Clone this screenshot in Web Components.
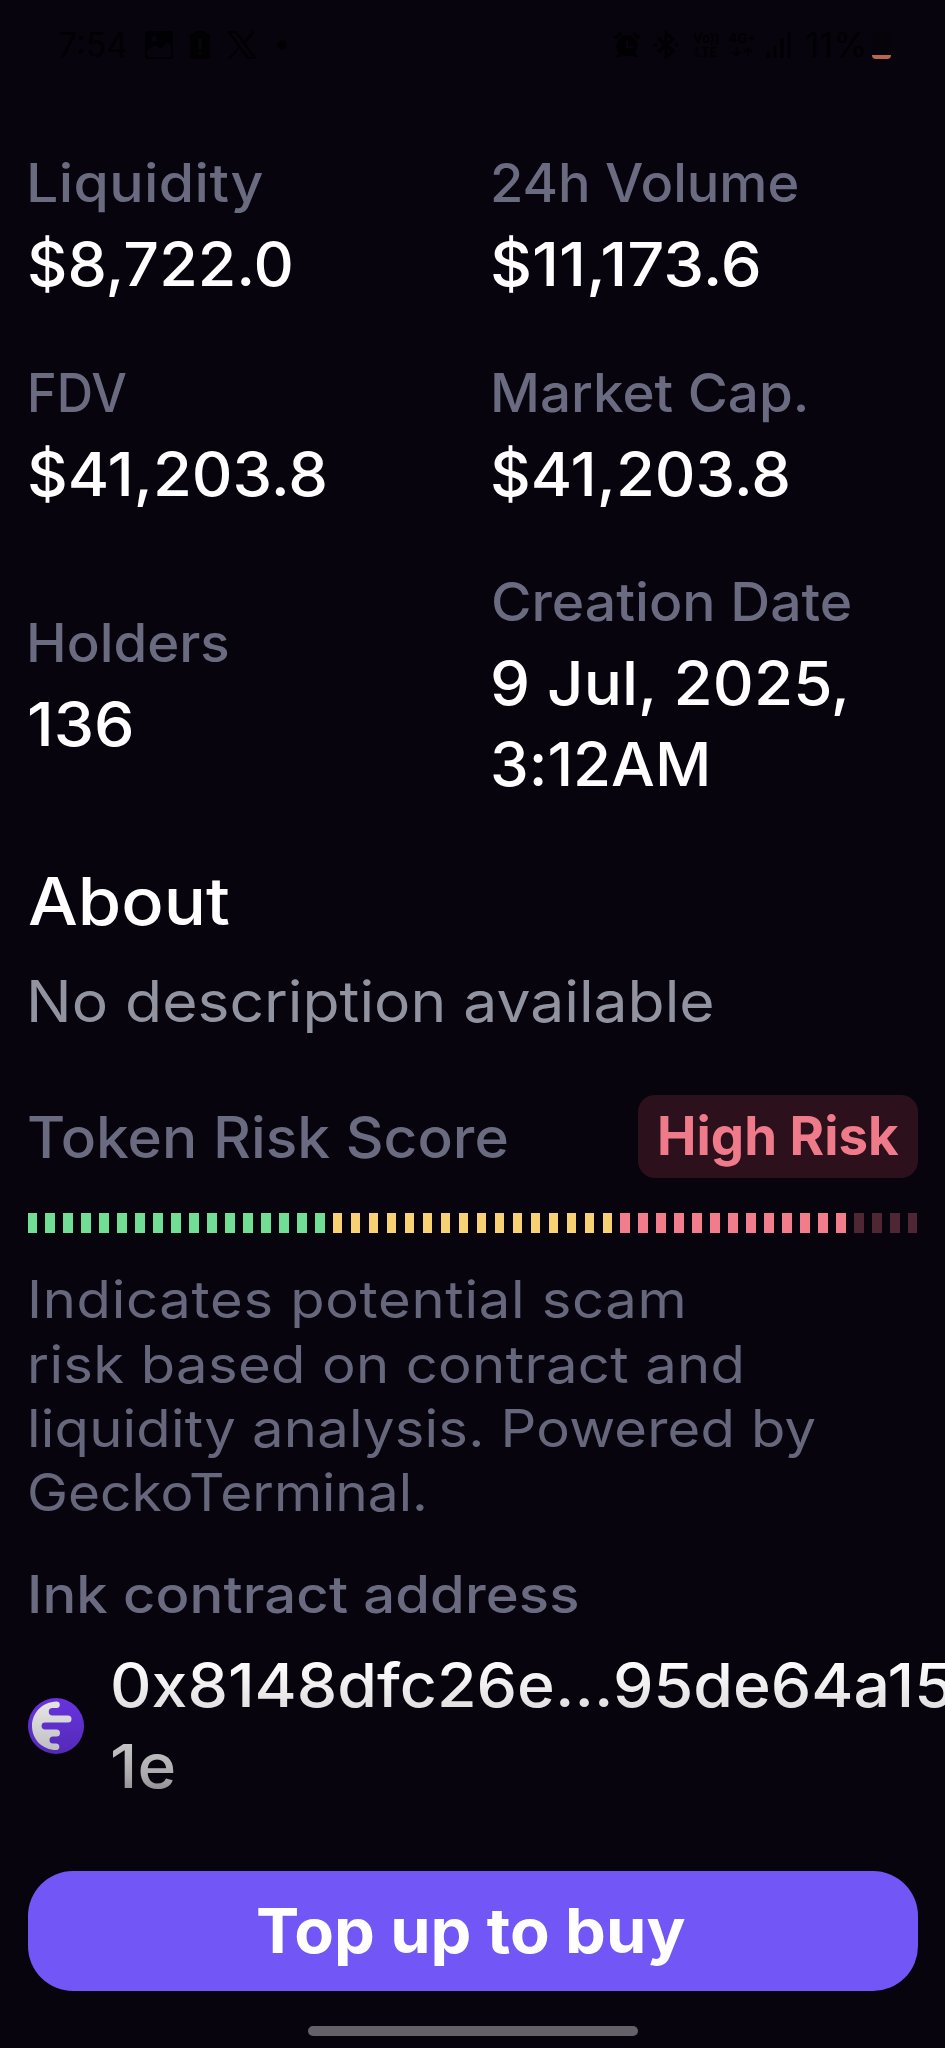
<!DOCTYPE html>
<html lang="en">
<head>
<meta charset="utf-8">
<title>Token details</title>
<style>
html,body{margin:0;background:#07040d}
body{width:945px;height:2048px;overflow:hidden;font-family:Inter,"Liberation Sans",sans-serif}
</style>
</head>
<body>
<token-screen></token-screen>
<script>
const define = (name, html, setup) => customElements.define(name, class extends HTMLElement {
  constructor() {
    super();
    const t = document.createElement('template');
    t.innerHTML = html;
    this.attachShadow({mode: 'open'}).append(t.content.cloneNode(true));
  }
  connectedCallback() { if (setup) setup(this, this.shadowRoot); }
});

/* One line of type: size, weight, line height, and the ink's inset and width.
   The glyphs are widened to fill the width; past 8% the rest goes to tracking. */
const pen = document.createElement('canvas').getContext('2d');
define('type-line', `<style>:host{display:block;white-space:pre}span{display:block;width:max-content;transform-origin:0 0}</style><span><slot></slot></span>`, (el, root) => {
  const n = k => parseFloat(el.getAttribute(k));
  const text = el.textContent, s = root.querySelector('span').style;
  const weight = el.getAttribute('weight') || 500;
  pen.font = `${weight} ${n('size')}px Inter, "Liberation Sans", sans-serif`;
  const m = pen.measureText(text);
  const ink = m.actualBoundingBoxRight + m.actualBoundingBoxLeft;
  const k = Math.min(1.08, Math.max(.94, n('w') / ink));
  s.fontSize = n('size') + 'px';
  s.fontWeight = weight;
  s.lineHeight = n('lh') + 'px';
  s.transform = `scaleX(${k})`;
  s.letterSpacing = (n('w') / k - ink) / (text.length - 1) + 'px';
  s.marginLeft = (n('in') || 0) + m.actualBoundingBoxLeft * k + 'px';
});

define('status-bar', `<style>
:host{display:flex;height:92px;box-sizing:border-box;padding:27px 54px 0 57px;justify-content:space-between;color:#010104;align-items:flex-start}
div{display:flex;align-items:center;height:36px}
svg{display:block;fill:none;stroke:#010104;stroke-width:3}
.f{fill:#010104;stroke:none}
.lte{font:700 13px/14px Inter,sans-serif;text-align:center}
.bat{width:19px;height:27px;border-radius:4px;background:linear-gradient(#06030a 0 23px,#b9654f 23px);margin-left:6px}
</style>
<div><type-line size="34" weight="400" lh="36" w="67" in="2">7:54</type-line>
<svg style="margin-left:15px" width="30" height="30" viewBox="0 0 30 30"><path class="f" fill-rule="evenodd" d="M4 1h22q3 0 3 3v22q0 3-3 3H4q-3 0-3-3V4q0-3 3-3zM3 20l8-5 6 4 6-7 4 4v9q0 2-2 2H5q-2 0-2-2zM10 6a3 3 0 1 0 .1 0z"/></svg>
<svg style="margin-left:14px" width="24" height="30" viewBox="0 0 24 30"><path class="f" fill-rule="evenodd" d="M7 3V1h10v2h2q3 0 3 3v20q0 3-3 3H5q-3 0-3-3V6q0-3 3-3zm3.500 5v11h3V8zm0 14v3h3v-3z"/></svg>
<svg style="margin-left:15px" width="30" height="30" viewBox="0 0 30 30"><path stroke-width="2.200" d="M2 2h7l19 26h-7zM27 1L17 13M13 17L2 29"/></svg>
<svg style="margin-left:20px" width="10" height="10"><circle class="f" cx="5" cy="5" r="4.500"/></svg></div>
<div>
<svg width="28" height="28" viewBox="0 0 28 28"><path class="f" fill-rule="evenodd" d="M14 4a11 11 0 0 1 8 18l3 4h-4l-2-2a11 11 0 0 1-10 0l-2 2H3l3-4A11 11 0 0 1 14 4zm-1 5v8h7v-2h-5V9z"/><path d="M2 7l6-5M26 7l-6-5"/></svg>
<svg style="margin-left:12px" width="26" height="28" viewBox="0 0 26 28"><path d="M5 7l15 13-7 6V2l7 6L5 21M1 14h3M22 14h3"/></svg>
<div class="lte" style="margin-left:14px;display:block;height:28px">Vo))<br>LTE</div>
<div class="lte" style="margin-left:9px;display:block;height:28px">4G+<br>↓↑</div>
<svg style="margin-left:10px" width="25" height="28" viewBox="0 0 25 28"><path d="M2 21v6M9 15v12M16 8v19M23 1v26"/></svg>
<type-line style="margin-left:15px" size="34" weight="400" lh="36" w="58">11%</type-line>
<span class="bat"></span></div>`);

define('stat-item', `<style>:host{display:flex;flex-direction:column;gap:6px;color:#fff}
.l{color:#6a6b81}</style><div class="l"><slot name="label"></slot></div><div><slot></slot></div>`);

define('stat-grid', `<style>:host{display:grid;grid-template-columns:463.5px 1fr;row-gap:52.700px;align-items:center}</style><slot></slot>`);

define('risk-badge', `<style>:host{display:block;box-sizing:border-box;width:279.5px;height:83px;border-radius:17px;background:#2c111c;color:#ee7a8a;padding-left:21.500px}</style><slot></slot>`);

define('risk-meter', `<style>:host{display:flex;justify-content:space-between;height:20px}
i{width:9.500px;background:#70de94}.y{background:#f8d173}.r{background:#f07c8c}.o{background:#4e2634}</style>`, (el, root) => {
  for (let k = 0; k < 50; k++) {
    const i = document.createElement('i');
    i.className = k < 17 ? '' : k < 33 ? 'y' : k < 46 ? 'r' : 'o';
    root.append(i);
  }
});

define('ink-logo', `<style>:host{display:block;width:56px;height:56px}svg{display:block}</style>
<svg width="56" height="56" viewBox="0 0 56 56"><circle cx="28" cy="28" r="28" fill="#7138f4"/>
<path fill="#fff" d="M28.500 3.500a3.300 3.300 0 0 1 0 6.600h-4a3.700 3.700 0 0 0 0 7.500h15.500a3.500 3.500 0 0 1 0 7H17a3.400 3.400 0 0 0 0 6.800h11.500a3.500 3.500 0 0 1 0 7H25a3.500 3.500 0 0 0 0 7h3.500a3.400 3.400 0 0 1 0 6.700C14 52 4 41 4 28S14 4 28.500 3.500z"/></svg>`);

define('contract-address', `<style>:host{display:flex;align-items:center;color:#fff}div{margin-left:29.500px}</style><ink-logo></ink-logo><div><slot></slot></div>`);

define('primary-button', `<style>:host{display:block}button{display:block;width:100%;height:119.500px;border:0;border-radius:45px;background:#7357f6;color:#fff;padding:0;font:inherit;text-align:left}</style><button><slot></slot></button>`);

define('token-screen', `<style>
:host{display:flex;flex-direction:column;position:relative;width:945px;height:2048px;overflow:hidden;background:#07040d}
main{padding:56px 27.500px 0;height:1779px;box-sizing:border-box}
.about{margin-top:54px;color:#fff}
.desc{margin-top:19px;color:#9293a0}
.risk{display:flex;align-items:center;justify-content:space-between;margin-top:55px;color:#6a6b81}
risk-meter{margin-top:35px}
.info{margin-top:35px;color:#66677c}
.ink{margin-top:34.500px;color:#6a6b81}
contract-address{margin-top:15px}
.fade{position:absolute;left:0;right:0;top:1660px;height:211px;background:linear-gradient(#07040d00,#07040d22 25%,#07040d58 55%,#07040d 100%)}
footer{position:relative;padding:0 27.500px}
.handle{width:330px;height:10px;border-radius:5px;background:#656169;margin:35.500px auto 0}
</style>
<status-bar></status-bar>
<main>
<stat-grid>
<stat-item><type-line slot="label" size="53" lh="70" in="3" w="232.500">Liquidity</type-line><type-line size="61" lh="81" in="2.500" w="260.500">$8,722.0</type-line></stat-item>
<stat-item><type-line slot="label" size="53" lh="70" in="2.500" w="304">24h Volume</type-line><type-line size="61" lh="81" in="2.500" w="266">$11,173.6</type-line></stat-item>
<stat-item><type-line slot="label" size="53" lh="70" in="3" w="95.500">FDV</type-line><type-line size="61" lh="81" in="2.500" w="295.500">$41,203.8</type-line></stat-item>
<stat-item><type-line slot="label" size="53" lh="70" in="3" w="311">Market Cap.</type-line><type-line size="61" lh="81" in="2.500" w="295.500">$41,203.8</type-line></stat-item>
<stat-item><type-line slot="label" size="53" lh="70" in="3" w="198">Holders</type-line><type-line size="61" lh="81" in="1.500" w="103">136</type-line></stat-item>
<stat-item><type-line slot="label" size="53" lh="70" in="2.500" w="357">Creation Date</type-line><type-line size="61" lh="81" in="2.500" w="353">9 Jul, 2025,</type-line><type-line size="61" lh="81" in="2.500" w="213.500">3:12AM</type-line></stat-item>
</stat-grid>
<type-line class="about" size="65.500" lh="86" in="1.500" w="199.500">About</type-line>
<type-line class="desc" size="57" weight="400" lh="76" in="3.500" w="681">No description available</type-line>
<div class="risk"><type-line size="57.500" lh="74" in="1.500" w="478">Token Risk Score</type-line>
<risk-badge><type-line size="53" weight="700" lh="83" w="239">High Risk</type-line></risk-badge></div>
<risk-meter></risk-meter>
<div class="info">
<type-line size="52" weight="400" lh="64.200" in="4" w="651.500">Indicates potential scam</type-line>
<type-line size="52" weight="400" lh="64.200" in="3.500" w="709.500">risk based on contract and</type-line>
<type-line size="52" weight="400" lh="64.200" in="4" w="783.500">liquidity analysis. Powered by</type-line>
<type-line size="52" weight="400" lh="64.200" in="2.500" w="393.500">GeckoTerminal.</type-line>
</div>
<type-line class="ink" size="52" lh="70" in="3.500" w="546">Ink contract address</type-line>
<contract-address><type-line size="61" lh="81" w="838">0x8148dfc26e...95de64a15</type-line><type-line size="61" lh="81" in="-1" w="62">1e</type-line></contract-address>
</main>
<div class="fade"></div>
<footer><primary-button><type-line size="62" weight="700" lh="119.500" in="230.500" w="427">Top up to buy</type-line></primary-button><div class="handle"></div></footer>`);
</script>
</body>
</html>
